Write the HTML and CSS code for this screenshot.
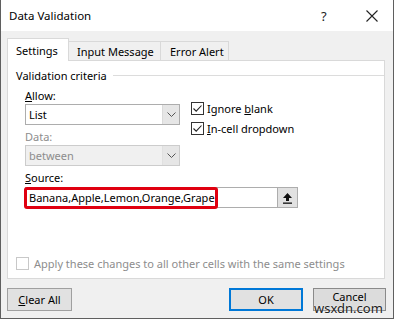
FILE: index.html
```html
<!DOCTYPE html>
<html>
<head>
<meta charset="utf-8">
<link rel="stylesheet" href="styles.css">
</head>
<body>
<div class="window">
  <div class="titlebar">
    <span class="title">Data Validation</span>
    <span class="help">?</span>
    <svg class="close" width="12" height="12" viewBox="0 0 12 12"><path d="M0.5 0.5 L11.5 11.5 M11.5 0.5 L0.5 11.5" stroke="#222" stroke-width="1.1" fill="none"/></svg>
  </div>
  <div class="tabs">
    <div class="tab selected">Settings</div>
    <div class="tab">Input Message</div>
    <div class="tab">Error Alert</div>
  </div>
  <div class="panel">
    <div class="group-title"><span>Validation criteria</span><div class="rule"></div></div>
    <div class="criteria">
      <div class="col-left">
        <div class="label"><u>A</u>llow:</div>
        <div class="combo">
          <div class="combo-value">List</div>
          <div class="combo-btn"><svg width="9" height="6" viewBox="0 0 9 6"><path d="M0.5 0.5 L4.5 4.5 L8.5 0.5" stroke="#555" stroke-width="1" fill="none"/></svg></div>
        </div>
        <div class="label disabled">Data:</div>
        <div class="combo disabled">
          <div class="combo-value">between</div>
          <div class="combo-btn"><svg width="9" height="6" viewBox="0 0 9 6"><path d="M0.5 0.5 L4.5 4.5 L8.5 0.5" stroke="#555" stroke-width="1" fill="none"/></svg></div>
        </div>
      </div>
      <div class="col-right">
        <div class="check"><span class="box"><svg width="11" height="11" viewBox="0 0 11 11"><path d="M1.5 5.5 L4.2 8.2 L9.5 2.5" stroke="#222" stroke-width="1.1" fill="none"/></svg></span><span>Ignore <u>b</u>lank</span></div>
        <div class="check"><span class="box"><svg width="11" height="11" viewBox="0 0 11 11"><path d="M1.5 5.5 L4.2 8.2 L9.5 2.5" stroke="#222" stroke-width="1.1" fill="none"/></svg></span><span><u>I</u>n-cell dropdown</span></div>
      </div>
    </div>
    <div class="label source-label"><u>S</u>ource:</div>
    <div class="source">
      <div class="source-input">
        <span class="highlight">Banana,Apple,Lemon,Orange,Grape</span>
      </div>
      <div class="ref-btn"><svg width="11" height="12" viewBox="0 0 11 12"><path d="M5.5 1 L10 6 L7 6 L7 9 L4 9 L4 6 L1 6 Z" fill="#111"/><rect x="1" y="10.5" width="9" height="1.3" fill="#111"/></svg></div>
    </div>
    <div class="apply"><span class="box light"></span><span>Apply these changes to all other cells with the same settings</span></div>
  </div>
  <div class="buttons">
    <div class="btn clear"><u>C</u>lear All</div>
    <div class="btn-group">
      <div class="btn default">OK</div>
      <div class="btn cancel"><span class="cancel-text">Cancel</span><span class="watermark">wsxdn.com</span></div>
    </div>
  </div>
</div>
</body>
</html>
```

FILE: styles.css
```css
* { box-sizing: border-box; }
html, body { margin: 0; padding: 0; }
body {
  width: 394px;
  height: 319px;
  overflow: hidden;
  font-family: "Noto Sans", "Open Sans", sans-serif;
  font-size: 11px;
  color: #000;
  background: #f0f0f0;
}
.window {
  width: 394px;
  height: 319px;
  background: #f0f0f0;
  border-left: 1px solid #5f5f5f;
  border-right: 1px solid #5f5f5f;
  border-bottom: 1px solid #5f5f5f;
}
.titlebar {
  height: 31px;
  background: #fff;
  display: flex;
  align-items: center;
  padding-left: 8px;
}
.title { flex: 1; font-size: 11.5px; }
.help { font-size: 13px; width: 14px; margin-right: 31px; color: #222; }
.close { margin-right: 15px; }
.tabs {
  display: flex;
  align-items: flex-end;
  padding-left: 6px;
  margin-top: 7px;
  height: 22px;
}
.tab {
  height: 19px;
  border: 1px solid #d9d9d9;
  border-bottom: none;
  border-left: none;
  padding: 0 0 0 8px;
  display: flex;
  align-items: center;
  white-space: nowrap;
  line-height: 1;
}
.tab.selected {
  height: 23px;
  background: #fff;
  border-left: 1px solid #d9d9d9;
  margin-bottom: -1px;
  position: relative;
  z-index: 1;
  width: 62px;
}
.tab:nth-child(2) { width: 92px; padding-left: 8px; }
.tab:nth-child(3) { width: 68px; padding-left: 9px; }
.panel {
  margin: 0 8px 0 6px;
  height: 219px;
  background: #fff;
  border: 1px solid #d9d9d9;
  padding: 6px 0 0 8px;
}
.group-title {
  display: flex;
  align-items: center;
  height: 17px;
}
.rule { flex: 1; height: 1px; background: #dcdcdc; margin-left: 6px; }
.criteria { display: flex; margin-left: 9px; margin-top: 3px; }
.col-left { width: 155px; }
.label { height: 17px; line-height: 17px; }
.label.disabled { color: #8d8d8d; margin-top: 3px; }
.combo {
  height: 21px;
  border: 1px solid #adadad;
  display: flex;
  background: #fff;
}
.combo-value { flex: 1; padding-left: 3px; line-height: 19px; }
.combo-btn {
  width: 17px;
  background: #e6e6e6;
  border-left: 1px solid #dadada;
  display: flex;
  align-items: center;
  justify-content: center;
}
.combo.disabled { background: #f0f0f0; border-color: #cccccc; color: #8d8d8d; }
.combo.disabled .combo-btn { background: #e6e6e6; border-left-color: #e0e0e0; }
.col-right { margin-left: 11px; padding-top: 11px; }
.check { display: flex; align-items: center; height: 20px; }
.check .box, .apply .box {
  width: 13px; height: 13px;
  border: 1px solid #333;
  display: flex; align-items: center; justify-content: center;
  margin-right: 3px;
  background: #fff;
}
.box.light { border-color: #c8c8c8; }
.source-label { margin-left: 9px; margin-top: 3px; }
.source {
  display: flex;
  margin-left: 9px;
  margin-top: 1px;
  width: 273px;
  height: 21px;
}
.source-input {
  flex: 1;
  border: 1px solid #adadad;
  border-right: none;
  position: relative;
}
.highlight {
  position: absolute;
  left: -2px;
  top: -1px;
  height: 22px;
  padding: 0 2px 0 2px;
  border: 3px solid #e00010;
  border-radius: 3px;
  line-height: 16px;
  white-space: nowrap;
  width: 194px;
}
.ref-btn {
  width: 21px;
  border: 1px solid #adadad;
  background: #e1e1e1;
  display: flex; align-items: center; justify-content: center;
}
.apply {
  display: flex;
  align-items: center;
  margin-top: 48px;
  color: #8d8d8d;
  height: 14px;
}
.apply .box { margin-right: 5px; }
.buttons {
  display: flex;
  justify-content: space-between;
  padding: 9px 7px 0 6px;
}
.btn-group { display: flex; gap: 10px; }
.btn {
  height: 23px;
  border: 1px solid #a0a0a0;
  background-color: #e1e1e1;
  display: flex; align-items: center; justify-content: center;
}
.btn.clear { width: 65px; }
.btn.default { border: 2px solid #0078d7; width: 74px; }
.btn.cancel {
  width: 73px;
  position: relative;
  padding-bottom: 6px;
  border: 1px solid #8a8a8a;
  background-color: #dcdcdc;
}
.cancel-text { line-height: 12px; }
.watermark {
  position: absolute;
  left: 0;
  top: 13px;
  font-size: 13px;
  line-height: 13px;
  color: #222;
  text-shadow: 0 0 2px #fff;
}
```
